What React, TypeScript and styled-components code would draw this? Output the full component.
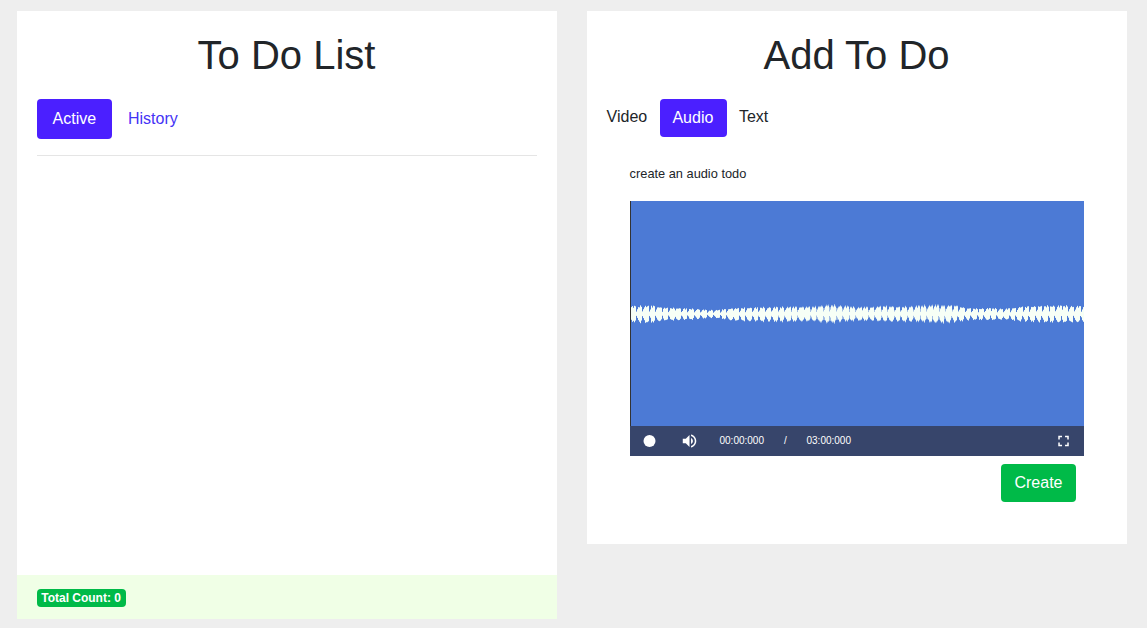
import React from "react";
import styled, { createGlobalStyle, css } from "styled-components";

const GlobalStyle = createGlobalStyle`
  *, *::before, *::after { box-sizing: border-box; }
  body {
    margin: 0;
    background: #eee;
    color: #212529;
    font-family: "Liberation Sans", Arial, sans-serif;
    font-size: 16px;
    line-height: 24px;
  }
  button { font: inherit; border: 0; background: none; margin: 0; cursor: pointer; }
`;

const Page = styled.main`
  display: flex;
  align-items: flex-start;
  gap: 30px;
  height: 628px;
  padding: 11px 20px 0 17px;
  overflow: hidden;
`;

const Panel = styled.section<{ $height: number }>`
  display: flex;
  flex-direction: column;
  width: 540px;
  height: ${(p) => p.$height}px;
  padding-top: 20px;
  background: #fff;
`;

const Title = styled.h1`
  margin: 0 0 20px;
  padding-right: 1px;
  font-size: 40px;
  font-weight: 500;
  line-height: 48px;
  text-align: center;
`;

const Pills = styled.nav`
  display: flex;
  margin: 0 20px;
  padding-bottom: 16px;
  border-bottom: 1px solid #e5e5e5;
`;

const Pill = styled.button<{ $active?: boolean }>`
  height: 40px;
  padding: 8px 16.2px;
  border-radius: 4px;
  color: #4433f5;
  ${(p) => p.$active && css`
    padding: 8px 15.6px;
    background: #4b1fff;
    color: #fff;
  `}
`;

const Footer = styled.footer`
  display: flex;
  align-items: flex-start;
  height: 44px;
  margin-top: auto;
  padding: 14px 20px;
  background: #f0ffe6;
`;

const Badge = styled.span`
  height: 18px;
  padding: 3px 4.7px 3px 4.2px;
  border-radius: 4px;
  background: #00ba48;
  color: #fff;
  font-size: 12px;
  font-weight: 700;
  line-height: 12px;
  white-space: nowrap;
`;

const Kinds = styled.nav`
  display: flex;
  align-items: flex-start;
  gap: 12.4px;
  height: 38px;
  margin-left: 19.6px;
`;

const Kind = styled.button<{ $active?: boolean }>`
  height: ${(p) => (p.$active ? 38 : 36)}px;
  padding: ${(p) => (p.$active ? "7px 13.2px 7px 12.8px" : "6px 0")};
  border-radius: 4px;
  color: ${(p) => (p.$active ? "#fff" : "#212529")};
  background: ${(p) => (p.$active ? "#4b1fff" : "transparent")};
`;

const Form = styled.div`
  display: flex;
  flex-direction: column;
  width: 454px;
  margin: 27px 0 0 43px;
`;

const Hint = styled.p`
  margin: 0 0 17px -0.4px;
  font-size: 12.8px;
  line-height: 20px;
`;

const Recorder = styled.div`
  height: 255px;
  background: #4c7ad5;
`;

const Screen = styled.div`
  height: 225px;
  border-left: 1px solid #333;
  padding-top: 100px;
`;

const Controls = styled.div`
  display: flex;
  align-items: center;
  height: 30px;
  background: #37456b;
  color: #fff;
`;

const Control = styled.button`
  display: flex;
  align-items: center;
  justify-content: center;
  width: 40px;
  height: 30px;
  padding: 0 2px 0 0;
  color: #fff;
`;

const Time = styled.span<{ $width: number }>`
  width: ${(p) => p.$width}px;
  padding-bottom: 1px;
  font-size: 10px;
  line-height: 29px;
  white-space: nowrap;
`;

const Times = styled.div`
  display: flex;
  flex: 1;
  padding-left: 9.5px;
`;

const Create = styled.button`
  align-self: flex-end;
  height: 38px;
  margin: 8px 8px 0 0;
  padding: 7px 13.5px;
  border-radius: 4px;
  background: #00ba48;
  color: #fff;
`;

// Envelope stops: position, reach above the axis, reach below the axis, softness.
const envelope = [
  [0, 8, 8, 0.1], [12, 8.5, 9.5, 0.3], [22, 8.5, 8.8, 0.3], [32, 6.6, 6.8, 0.3],
  [50, 6, 6.5, 0.2], [64, 5, 5.5, 0.1], [78, 3.9, 4, 0.2], [88, 4.2, 4.5, 0.2],
  [100, 5.8, 6.8, 0.2], [125, 7, 8, 0.4], [150, 7.4, 8.3, 0.5], [180, 8, 7.8, 0.7],
  [199, 9.9, 10.2, 0.8], [213, 8.8, 8, 0.7], [225, 7.2, 7.3, 0.7], [240, 7.6, 7.2, 0.6],
  [254, 8.8, 8.4, 0.6], [270, 7.6, 8.2, 0.5], [290, 9, 8.4, 0.7], [310, 9.8, 9.8, 0.7],
  [324, 9, 9, 0.5], [334, 6.5, 6.8, 0.3], [345, 5.5, 6, 0.2], [358, 6, 6.4, 0.2],
  [374, 5.3, 5.6, 0.2], [390, 7.5, 7.6, 0.1], [410, 8.5, 8.6, 0.3], [430, 8.7, 8.8, 0.3], [453, 8, 8.4, 0.2],
];

const upper = [0.88, 0.96, 0.84, 1, 0.95, 0.3, 0.55];
const lower = [0.76, 0.96, 0.94, 1, 0.8, 0.25, 0.45];

function sample(x: number) {
  const i = Math.max(1, envelope.findIndex((e) => e[0] >= x));
  const a = envelope[i - 1];
  const b = envelope[i];
  const t = (x - a[0]) / (b[0] - a[0]);
  return [1, 2, 3].map((k) => a[k] + (b[k] - a[k]) * t);
}

const waveBars = Array.from({ length: 453 }, (_, x) => {
  const [up, down, soft] = sample(x);
  const phase = Math.floor((((x + 0.3) % 6.45) / 6.45) * 7);
  const ripple = 0.97 + 0.07 * Math.sin(x * 2.3);
  const top = up * upper[phase] * ripple;
  const bottom = down * lower[(phase + (x > 300 ? 1 : 0)) % 7] * ripple;
  const haloTop = Math.max(top, up * soft * 0.85);
  const haloBottom = Math.max(bottom, down * soft * 0.85);
  const core = 1 - soft * 0.18;
  return { x, top: top * core, bottom: bottom * core, haloTop, haloBottom };
});

const AXIS = 12.9;

function Wave() {
  return (
    <svg width="453" height="26" viewBox="0 0 453 26" display="block">
      {waveBars.map(({ x, top, bottom, haloTop, haloBottom }) => (
        <g key={x} fill="#f7fff6">
          <rect x={x} width="1" y={AXIS - haloTop} height={haloTop + haloBottom} opacity="0.5" />
          <rect x={x} width="1" y={AXIS - top} height={top + bottom} />
        </g>
      ))}
    </svg>
  );
}

export default function App() {
  return (
    <>
      <GlobalStyle />
      <Page>
        <Panel $height={608}>
          <Title>To Do List</Title>
          <Pills>
            <Pill $active>Active</Pill>
            <Pill>History</Pill>
          </Pills>
          <Footer>
            <Badge>Total Count: 0</Badge>
          </Footer>
        </Panel>
        <Panel $height={533}>
          <Title>Add To Do</Title>
          <Kinds>
            <Kind>Video</Kind>
            <Kind $active>Audio</Kind>
            <Kind>Text</Kind>
          </Kinds>
          <Form>
            <Hint>create an audio todo</Hint>
            <Recorder>
              <Screen>
                <Wave />
              </Screen>
              <Controls>
                <Control aria-label="Record">
                  <svg width="18" height="18" viewBox="-0.7 0 24 24" fill="currentColor">
                    <circle cx="12" cy="12" r="8" />
                  </svg>
                </Control>
                <Control aria-label="Mute">
                  <svg width="18" height="18" viewBox="-0.7 0 24 24" fill="currentColor">
                    <path d="M3 9v6h4l5 5V4L7 9H3zm13.5 3c0-1.77-1.02-3.29-2.5-4.03v8.05c1.48-.73 2.5-2.25 2.5-4.02zM14 3.23v2.06c2.89.86 5 3.54 5 6.71s-2.11 5.85-5 6.71v2.06c4.01-.91 7-4.49 7-8.77s-2.99-7.86-7-8.77z" />
                  </svg>
                </Control>
                <Times>
                  <Time $width={64.5}>00:00:000</Time>
                  <Time $width={22.5}>/</Time>
                  <Time $width={60}>03:00:000</Time>
                </Times>
                <Control aria-label="Fullscreen">
                  <svg width="18" height="18" viewBox="-0.7 0 24 24" fill="currentColor">
                    <path d="M7 14H5v5h5v-2H7v-3zm-2-4h2V7h3V5H5v5zm12 7h-3v2h5v-5h-2v3zM14 5v2h3v3h2V5h-5z" />
                  </svg>
                </Control>
              </Controls>
            </Recorder>
            <Create>Create</Create>
          </Form>
        </Panel>
      </Page>
    </>
  );
}
